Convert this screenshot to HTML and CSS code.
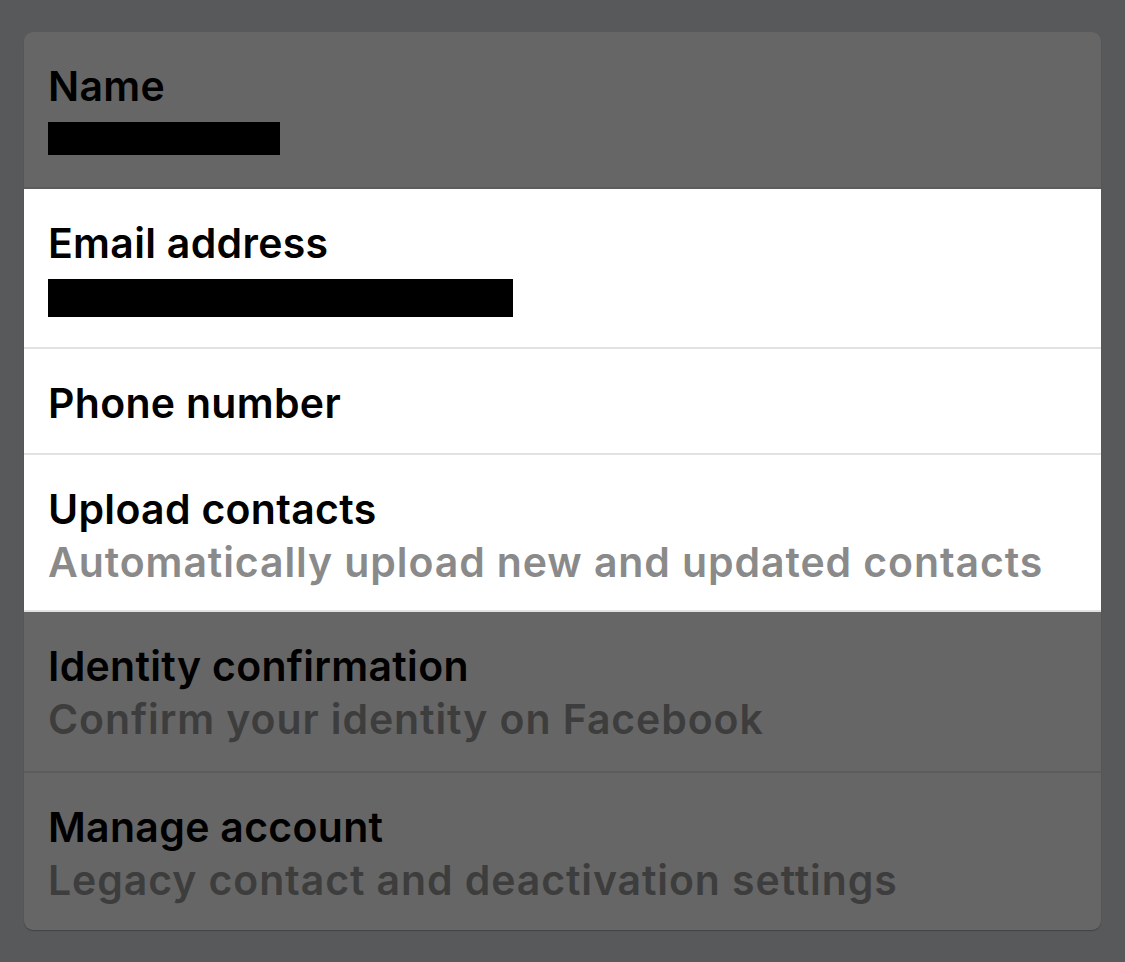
FILE: index.html
```html
<!DOCTYPE html>
<html lang="en">
<head>
<meta charset="utf-8">
<title>Account settings</title>
<link rel="stylesheet" href="styles.css">
</head>
<body>
<div class="card">
  <div class="row dim">
    <div class="title">Name</div>
    <div class="redact redact-name"></div>
  </div>
  <div class="row lit email">
    <div class="title">Email address</div>
    <div class="redact redact-email"></div>
  </div>
  <div class="row lit single">
    <div class="title">Phone number</div>
  </div>
  <div class="row lit double">
    <div class="title">Upload contacts</div>
    <div class="sub">Automatically upload new and updated contacts</div>
  </div>
  <div class="row dim double tall">
    <div class="title">Identity confirmation</div>
    <div class="sub">Confirm your identity on Facebook</div>
  </div>
  <div class="row dim double last">
    <div class="title">Manage account</div>
    <div class="sub">Legacy contact and deactivation settings</div>
  </div>
</div>
</body>
</html>
```

FILE: styles.css
```css
html, body {
  margin: 0;
  padding: 0;
  background: #58595b;
}
body {
  padding: 32px 24px 32px 24px;
  font-family: Inter, "Noto Sans", "Liberation Sans", sans-serif;
}
.card {
  width: 1077px;
  border-radius: 9px;
  overflow: hidden;
  background: #666666;
  box-shadow: 0 1px 1px rgba(0,0,0,0.25);
}
.row {
  padding: 28px 24px 24px 24px;
  border-bottom: 2px solid #5c5c5c;
}
.row.lit {
  background: #ffffff;
  border-bottom-color: #e2e2e2;
}
.title {
  font-size: 41px;
  font-weight: 600;
  line-height: 52px;
  color: #000;
  letter-spacing: 0.3px;
  white-space: nowrap;
}
.sub {
  font-size: 41px;
  font-weight: 600;
  line-height: 54px;
  color: #8a8a8a;
  letter-spacing: 0.9px;
  white-space: nowrap;
}
.dim .sub {
  color: #3d3d3d;
}
.single {
  padding-bottom: 24px;
}
.double {
  padding-bottom: 21px;
}
.tall {
  padding-bottom: 25px;
}
.row.last {
  border-bottom: none;
  padding-bottom: 23px;
}
.redact {
  background: #000;
}
.redact-name {
  width: 232px;
  height: 33px;
  margin-top: 10px;
  margin-bottom: 8px;
}
.redact-email {
  width: 465px;
  height: 38px;
  margin-top: 10px;
  margin-bottom: 6px;
}
```
